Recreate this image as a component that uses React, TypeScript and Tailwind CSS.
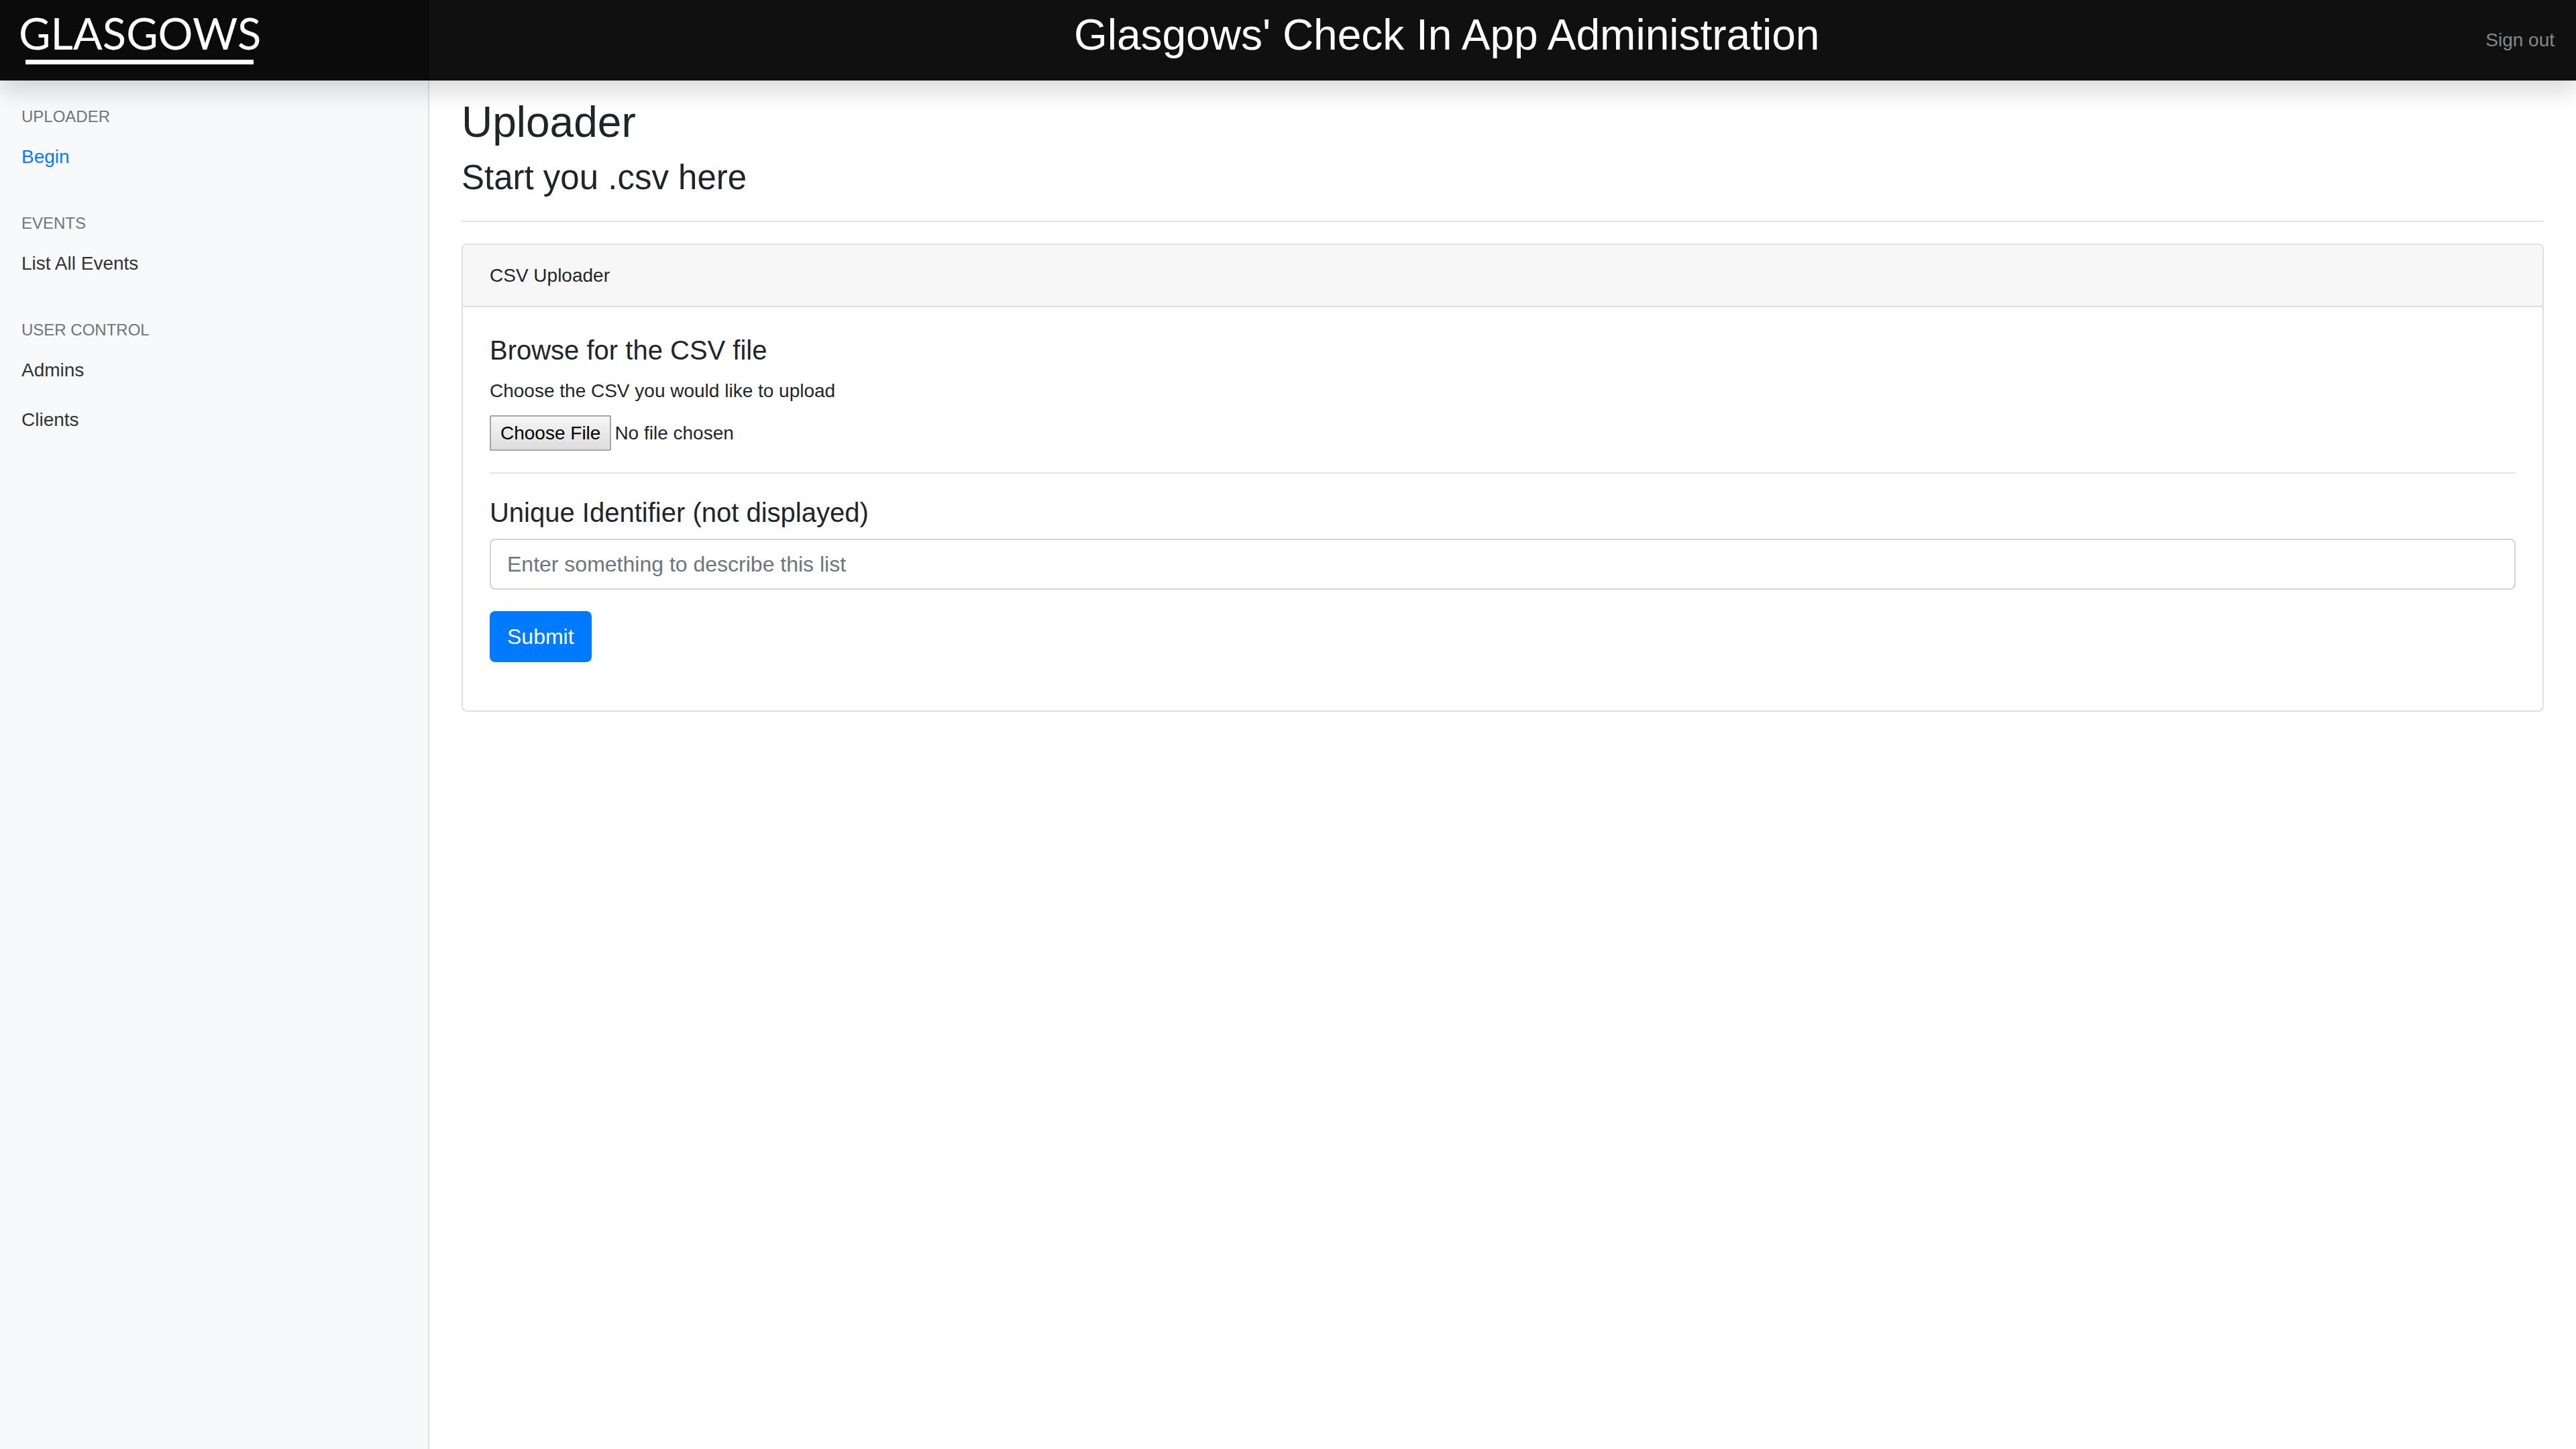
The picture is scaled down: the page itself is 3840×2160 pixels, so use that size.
import React from "react";

type NavSection = { title: string; links: { label: string; active?: boolean }[] };

const sections: NavSection[] = [
  { title: "Uploader", links: [{ label: "Begin", active: true }] },
  { title: "Events", links: [{ label: "List All Events" }] },
  { title: "User Control", links: [{ label: "Admins" }, { label: "Clients" }] },
];

function Header() {
  return (
    <header className="relative z-10 flex h-[120px] items-stretch justify-between bg-[#101010] shadow-[0_16px_32px_rgba(0,0,0,0.15),inset_0_-1px_0_rgba(0,0,0,0.6)]">
      <a
        href="#"
        aria-label="Glasgows"
        className="flex w-1/6 flex-col items-start bg-[#0b0b0b] px-[28px] pt-[16px] shadow-[inset_-2px_-1px_0_rgba(0,0,0,0.25)]"
      >
        <span className="font-['Lato',sans-serif] text-[65px] leading-[66px] text-white">GLASGOWS</span>
        <span className="ml-[10px] mt-[7px] h-[7px] w-[340px] bg-white" />
      </a>
      <h2 className="mb-[16px] self-center text-[64px] leading-[77px] text-white">
        Glasgows&apos; Check In App Administration
      </h2>
      <nav className="flex items-center px-[32px]">
        <a href="#" className="text-[28px] leading-[42px] text-white/50">
          Sign out
        </a>
      </nav>
    </header>
  );
}

function Sidebar() {
  return (
    <nav className="w-1/6 bg-[#f8f9fa] pt-[39px] shadow-[inset_-2px_0_0_rgba(0,0,0,0.1)]">
      {sections.map((section) => (
        <section key={section.title} className="mb-[47px]">
          <h6 className="mb-[9px] px-[32px] text-[24px] leading-[29px] text-[#6c757d] uppercase">
            {section.title}
          </h6>
          <ul>
            {section.links.map((link) => (
              <li key={link.label}>
                <a
                  href="#"
                  className={
                    link.active
                      ? "block px-[32px] py-[16px] text-[28px] leading-[42px] text-[#007bff]"
                      : "block px-[32px] py-[16px] text-[28px] leading-[42px] text-[#333333]"
                  }
                >
                  {link.label}
                </a>
              </li>
            ))}
          </ul>
        </section>
      ))}
    </nav>
  );
}

function FilePicker() {
  const input = React.useRef<HTMLInputElement>(null);
  const [name, setName] = React.useState("No file chosen");
  return (
    <div className="flex items-center gap-[5px]">
      <input
        ref={input}
        id="csv"
        type="file"
        accept=".csv"
        className="hidden"
        onChange={(e) => setName(e.target.files?.[0]?.name ?? "No file chosen")}
      />
      <button
        type="button"
        onClick={() => input.current?.click()}
        className="h-[53px] rounded-[2px] border-2 border-[#a6a6a6] bg-linear-to-b from-[#f6f6f6] to-[#dddddd] px-[14px] text-[28px] leading-[32px] text-black"
      >
        Choose File
      </button>
      <label htmlFor="csv">{name}</label>
    </div>
  );
}

function UploaderCard() {
  return (
    <section className="mt-[32px] rounded-[8px] border-2 border-[#dfdfdf] bg-white">
      <div className="rounded-t-[6px] border-b-2 border-[#dfdfdf] bg-[#f7f7f7] px-[40px] pt-[25px] pb-[24px]">
        CSV Uploader
      </div>
      <form className="p-[40px]" onSubmit={(e) => e.preventDefault()}>
        <h5 className="mb-[16px] text-[40px] leading-[48px]">Browse for the CSV file</h5>
        <p className="mb-[15px]">Choose the CSV you would like to upload</p>
        <FilePicker />
        <hr className="mt-[32px] mb-[34px] border-t-2 border-[#e5e5e5]" />
        <label htmlFor="identifier" className="mb-[15px] block text-[40px] leading-[48px]">
          Unique Identifier (not displayed)
        </label>
        <input
          id="identifier"
          type="text"
          placeholder="Enter something to describe this list"
          className="block h-[76px] w-full rounded-[8px] border-2 border-[#ced4da] bg-white px-[24px] text-[32px] leading-[48px] placeholder:text-[#6c757d]"
        />
        <button
          type="submit"
          className="my-[32px] block h-[76px] rounded-[8px] bg-[#007bff] px-[26px] text-[32px] leading-[48px] text-white"
        >
          Submit
        </button>
      </form>
    </section>
  );
}

export default function App() {
  return (
    <div className="flex min-h-screen flex-col bg-white font-['Liberation_Sans',Arial,sans-serif] text-[28px] leading-[42px] text-[#212529]">
      <Header />
      <div className="flex flex-1">
        <Sidebar />
        <main className="flex-1 px-[48px] pt-[24px]">
          <div className="border-b-2 border-[#dee2e6] pb-[34px]">
            <h1 className="text-[64px] leading-[77px]">Uploader</h1>
            <p className="mt-[13px] text-[51px] leading-[61px]">Start you .csv here</p>
          </div>
          <UploaderCard />
        </main>
      </div>
    </div>
  );
}
